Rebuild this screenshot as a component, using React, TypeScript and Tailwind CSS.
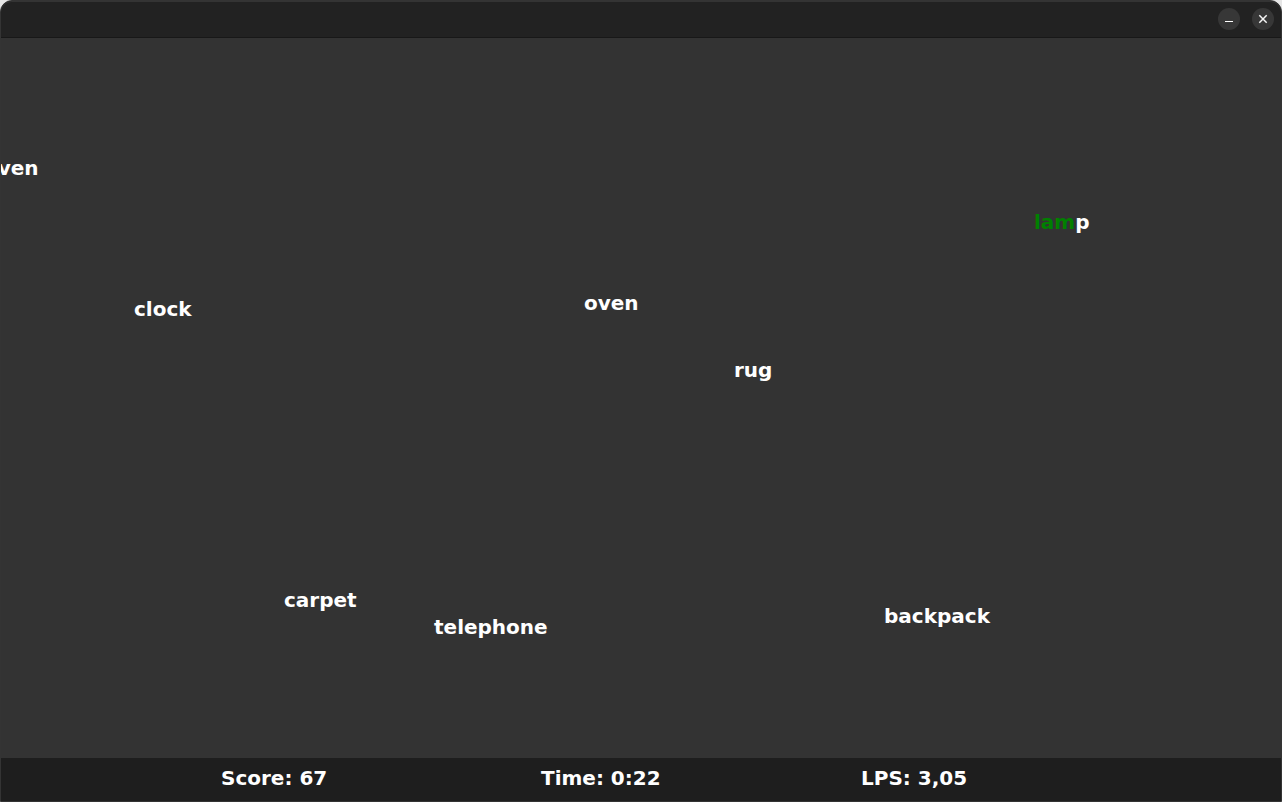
type Word = { text: string; typed: number; x: number; y: number };

const words: Word[] = [
  { text: "oven", typed: 0, x: -17, y: 118 },
  { text: "clock", typed: 0, x: 133, y: 259 },
  { text: "carpet", typed: 0, x: 283, y: 550 },
  { text: "telephone", typed: 0, x: 433, y: 577 },
  { text: "oven", typed: 0, x: 583, y: 253 },
  { text: "rug", typed: 0, x: 733, y: 320 },
  { text: "backpack", typed: 0, x: 883, y: 566 },
  { text: "lamp", typed: 3, x: 1033, y: 172 },
];

const stats = ["Score: 67", "Time: 0:22", "LPS: 3,05"];

function TitleBar() {
  return (
    <header className="flex h-[37px] shrink-0 items-center justify-end gap-3 rounded-t-[11px] border-b border-[#181818] bg-[#222222] pr-[7px] shadow-[inset_0_1px_0_#343434]">
      <button
        type="button"
        aria-label="Minimize"
        className="flex size-[22px] items-center justify-center rounded-full bg-[#373737]"
      >
        <svg width="16" height="16" viewBox="0 0 16 16" aria-hidden="true">
          <path d="M4 10h8v1H4z" fill="#ffffff" />
        </svg>
      </button>
      <button
        type="button"
        aria-label="Close"
        className="flex size-[22px] items-center justify-center rounded-full bg-[#373737]"
      >
        <svg width="16" height="16" viewBox="0 0 16 16" aria-hidden="true">
          <path d="M4.3 4.3l7.4 7.4M11.7 4.3l-7.4 7.4" stroke="#f4f4f4" strokeWidth="1.5" />
        </svg>
      </button>
    </header>
  );
}

export default function App() {
  return (
    <div className="min-h-screen bg-[#e6e6e6]">
      <div className="flex min-h-screen flex-col overflow-hidden rounded-t-xl border border-[#343434] bg-[#333333] font-['DejaVu_Sans',sans-serif] text-[20px] leading-6 font-bold text-white">
        <TitleBar />
        <main className="relative flex-1 overflow-hidden">
          {words.map((word) => (
            <span
              key={word.x}
              className="absolute whitespace-nowrap"
              style={{ left: word.x, top: word.y }}
            >
              <span className="text-[#008000]">{word.text.slice(0, word.typed)}</span>
              {word.text.slice(word.typed)}
            </span>
          ))}
        </main>
        <footer className="grid h-[43px] shrink-0 grid-cols-[11fr_16fr_16fr_21fr] items-center bg-[#1e1e1e] pb-1">
          {stats.map((stat) => (
            <p key={stat} className="whitespace-nowrap first:col-start-2">
              {stat}
            </p>
          ))}
        </footer>
      </div>
    </div>
  );
}
